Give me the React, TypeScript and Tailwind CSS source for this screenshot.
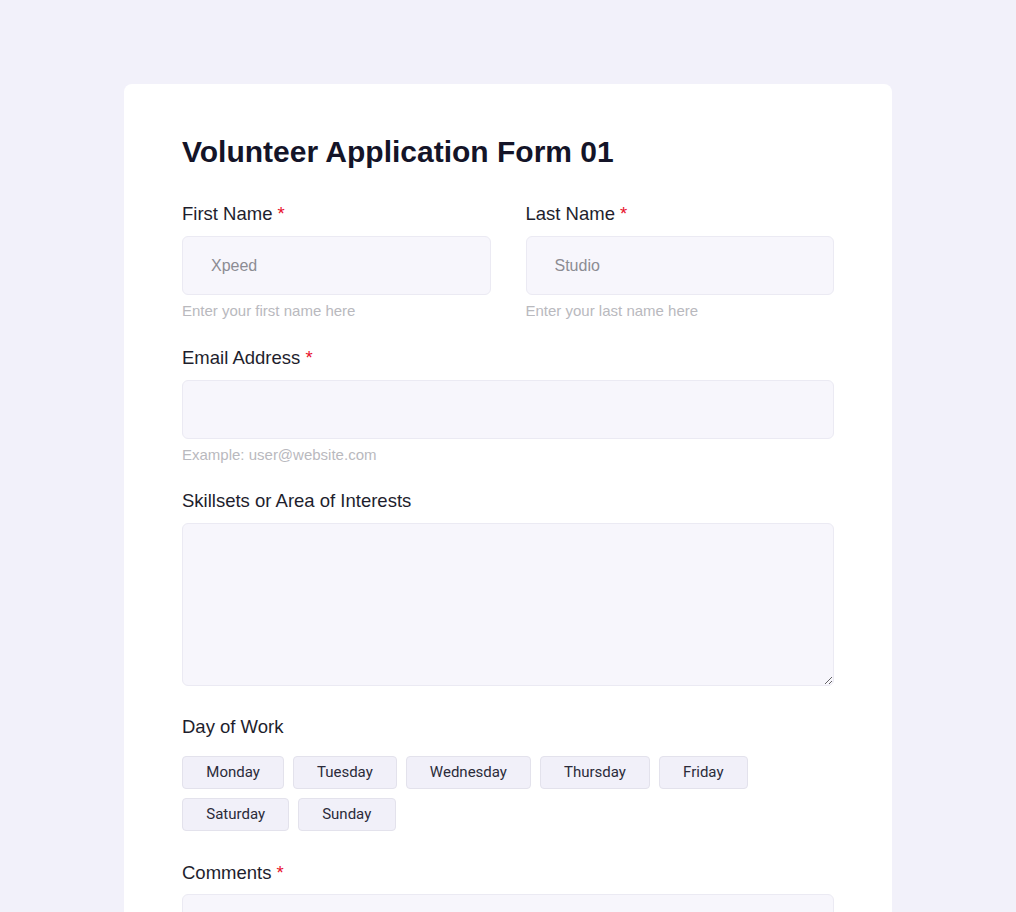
import React from "react";

const days1 = ["Monday", "Tuesday", "Wednesday", "Thursday", "Friday"];
const days2 = ["Saturday", "Sunday"];

function Label({ text, req }: { text: string; req?: boolean }) {
  return (
    <div className="text-[18.5px] leading-[24px] text-[#1e1e2d]">
      {text}
      {req && <span className="text-[#e8112d]"> *</span>}
    </div>
  );
}

function Input({ placeholder }: { placeholder?: string }) {
  return (
    <input
      className="mt-[10px] block h-[59px] w-full rounded-[6px] border border-[#ebeaf3] bg-[#f7f6fc] px-[28px] text-[16px] text-[#333] placeholder:text-[#8c8c93] outline-none"
      placeholder={placeholder}
    />
  );
}

function Help({ text }: { text: string }) {
  return <div className="mt-[6px] text-[15px] leading-[20px] text-[#b9b9be]">{text}</div>;
}

function Day({ d }: { d: string }) {
  return (
    <button className="h-[33px] rounded-[4px] border border-[#e3e2ec] bg-[#f1f0f9] px-[23.3px] text-[15px] text-[#2b2b3a] [font-family:Roboto,sans-serif]">
      {d}
    </button>
  );
}

export default function App() {
  return (
    <div className="min-h-[912px] bg-[#f2f1fa] pt-[84px] [font-family:'Liberation_Sans',Arial,sans-serif]">
      <div className="mx-auto w-[768px] rounded-t-[8px] bg-white px-[58px] pt-[50px] pb-[60px]">
        <h1 className="text-[30px] font-bold leading-[36px] text-[#141428]">Volunteer Application Form 01</h1>

        <div className="mt-[32px] grid grid-cols-2 gap-x-[35px]">
          <div>
            <Label text="First Name" req />
            <Input placeholder="Xpeed" />
            <Help text="Enter your first name here" />
          </div>
          <div>
            <Label text="Last Name" req />
            <Input placeholder="Studio" />
            <Help text="Enter your last name here" />
          </div>
        </div>

        <div className="mt-[25px]">
          <Label text="Email Address" req />
          <Input />
          <Help text="Example: user@website.com" />
        </div>

        <div className="mt-[24px]">
          <Label text="Skillsets or Area of Interests" />
          <textarea className="mt-[10px] block h-[163px] w-full rounded-[6px] border border-[#ebeaf3] bg-[#f7f6fc] px-[28px] py-[16px] text-[16px] outline-none" />
        </div>

        <div className="mt-[29px]">
          <Label text="Day of Work" />
          <div className="mt-[17px] flex flex-col gap-[9px]">
            <div className="flex gap-[8.5px]">
              {days1.map((d) => (
                <Day key={d} d={d} />
              ))}
            </div>
            <div className="flex gap-[8.5px]">
              {days2.map((d) => (
                <Day key={d} d={d} />
              ))}
            </div>
          </div>
        </div>

        <div className="mt-[30px]">
          <Label text="Comments" req />
          <textarea className="mt-[9px] block h-[163px] w-full rounded-[6px] border border-[#ebeaf3] bg-[#f7f6fc] outline-none" />
        </div>
      </div>
    </div>
  );
}
